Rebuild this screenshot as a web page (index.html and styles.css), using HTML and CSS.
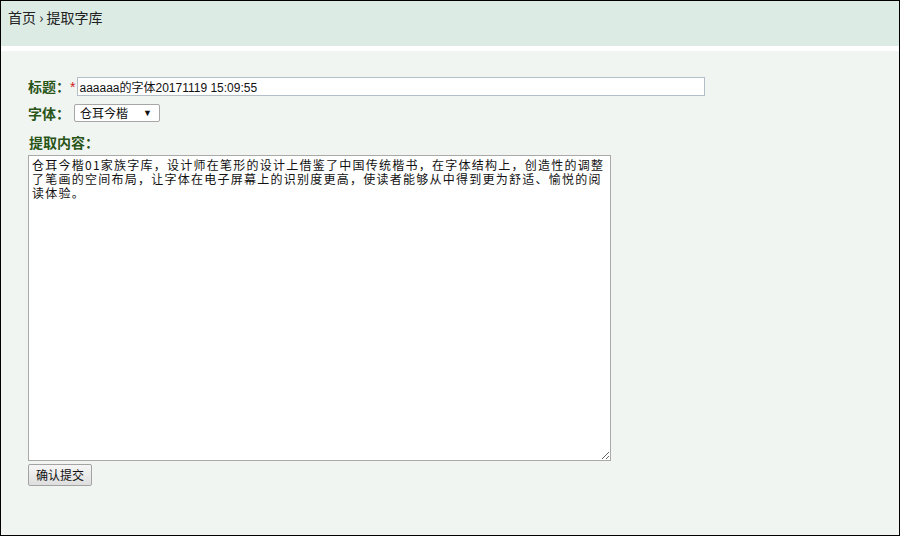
FILE: index.html
```html
<!DOCTYPE html>
<html lang="zh-CN">
<head>
<meta charset="utf-8">
<title>提取字库</title>
<link rel="stylesheet" href="styles.css">
</head>
<body>
<div class="frame">
  <div class="crumbs">首页 › 提取字库</div>
  <div class="gap"></div>
  <form class="content">
    <div class="row">
      <label class="lbl">标题：<span class="req">*</span></label>
      <input class="title-input" type="text" value="aaaaaa的字体20171119 15:09:55">
    </div>
    <div class="row">
      <label class="lbl">字体：</label>
      <span class="select-wrap">
        <select class="font-select"><option>仓耳今楷</option></select>
        <span class="arrow">▼</span>
      </span>
    </div>
    <div class="lbl block">提取内容：</div>
    <textarea class="body-text">仓耳今楷01家族字库，设计师在笔形的设计上借鉴了中国传统楷书，在字体结构上，创造性的调整了笔画的空间布局，让字体在电子屏幕上的识别度更高，使读者能够从中得到更为舒适、愉悦的阅读体验。</textarea>
    <div class="actions"><button type="button" class="btn">确认提交</button></div>
  </form>
</div>
</body>
</html>
```
FILE: styles.css
```css
html, body {
  margin: 0;
  padding: 0;
}
body {
  font-family: "Liberation Sans", "Noto Sans CJK SC", sans-serif;
  font-size: 13px;
  color: #222;
}
.frame {
  width: 900px;
  height: 536px;
  box-sizing: border-box;
  border: 1px solid #000;
  background: #f0f5f2;
  display: flex;
  flex-direction: column;
}
.crumbs {
  height: 45px;
  background: #dcece5;
  padding: 7px 0 0 7px;
  box-sizing: border-box;
  font-family: "Noto Sans CJK SC", sans-serif;
  font-size: 14px;
  line-height: 18px;
  color: #222;
}
.gap {
  height: 5px;
  background: #ffffff;
}
.content {
  padding: 26px 0 0 27px;
  display: flex;
  flex-direction: column;
  margin: 0;
}
.row {
  display: flex;
  align-items: center;
  margin-bottom: 8px;
}
.lbl {
  font-family: "Noto Sans CJK SC", sans-serif;
  font-weight: bold;
  font-size: 14px;
  color: #2a5518;
  line-height: 18px;
}
.req {
  color: #d0231c;
  font-weight: normal;
  font-family: "Liberation Sans", sans-serif;
  margin-right: 2px;
}
.title-input {
  width: 628px;
  height: 19px;
  box-sizing: border-box;
  border: 1px solid #b3bec6;
  background: #fff;
  padding: 0 1px;
  margin: 0;
  font-family: "Liberation Sans", "Noto Sans CJK SC", sans-serif;
  font-size: 12px;
  color: #111;
}
.select-wrap {
  position: relative;
  display: inline-block;
  margin-left: 4px;
}
.font-select {
  -webkit-appearance: none;
  appearance: none;
  width: 86px;
  height: 18px;
  box-sizing: border-box;
  border: 1px solid #a6a6a6;
  border-radius: 2px;
  background: #fff;
  font-family: "Noto Sans CJK SC", sans-serif;
  font-size: 12px;
  color: #111;
  padding: 0 0 0 5px;
  margin: 0;
  line-height: 16px;
}
.arrow {
  position: absolute;
  right: 8px;
  top: 3px;
  font-size: 9px;
  line-height: 12px;
  color: #111;
  pointer-events: none;
}
.block {
  display: block;
  margin: 3px 0 4px 1px;
}
.body-text {
  width: 583px;
  height: 306px;
  box-sizing: border-box;
  border: 1px solid #a9a9a9;
  background: #fff;
  padding: 2px 1px 2px 3px;
  margin: 0 0 3px 0;
  font-family: "Noto Sans CJK SC", sans-serif;
  font-size: 12px;
  letter-spacing: 1.25px;
  line-height: 14px;
  color: #111;
  resize: both;
  display: block;
}
.actions {
  display: flex;
}
.btn {
  width: 64px;
  height: 22px;
  margin: 0;
  box-sizing: border-box;
  border: 1px solid #a3a3a3;
  border-radius: 2px;
  background: linear-gradient(#f6f6f6, #dedede);
  font-family: "Noto Sans CJK SC", sans-serif;
  font-size: 12px;
  color: #111;
  padding: 0;
  line-height: 18px;
}
```
